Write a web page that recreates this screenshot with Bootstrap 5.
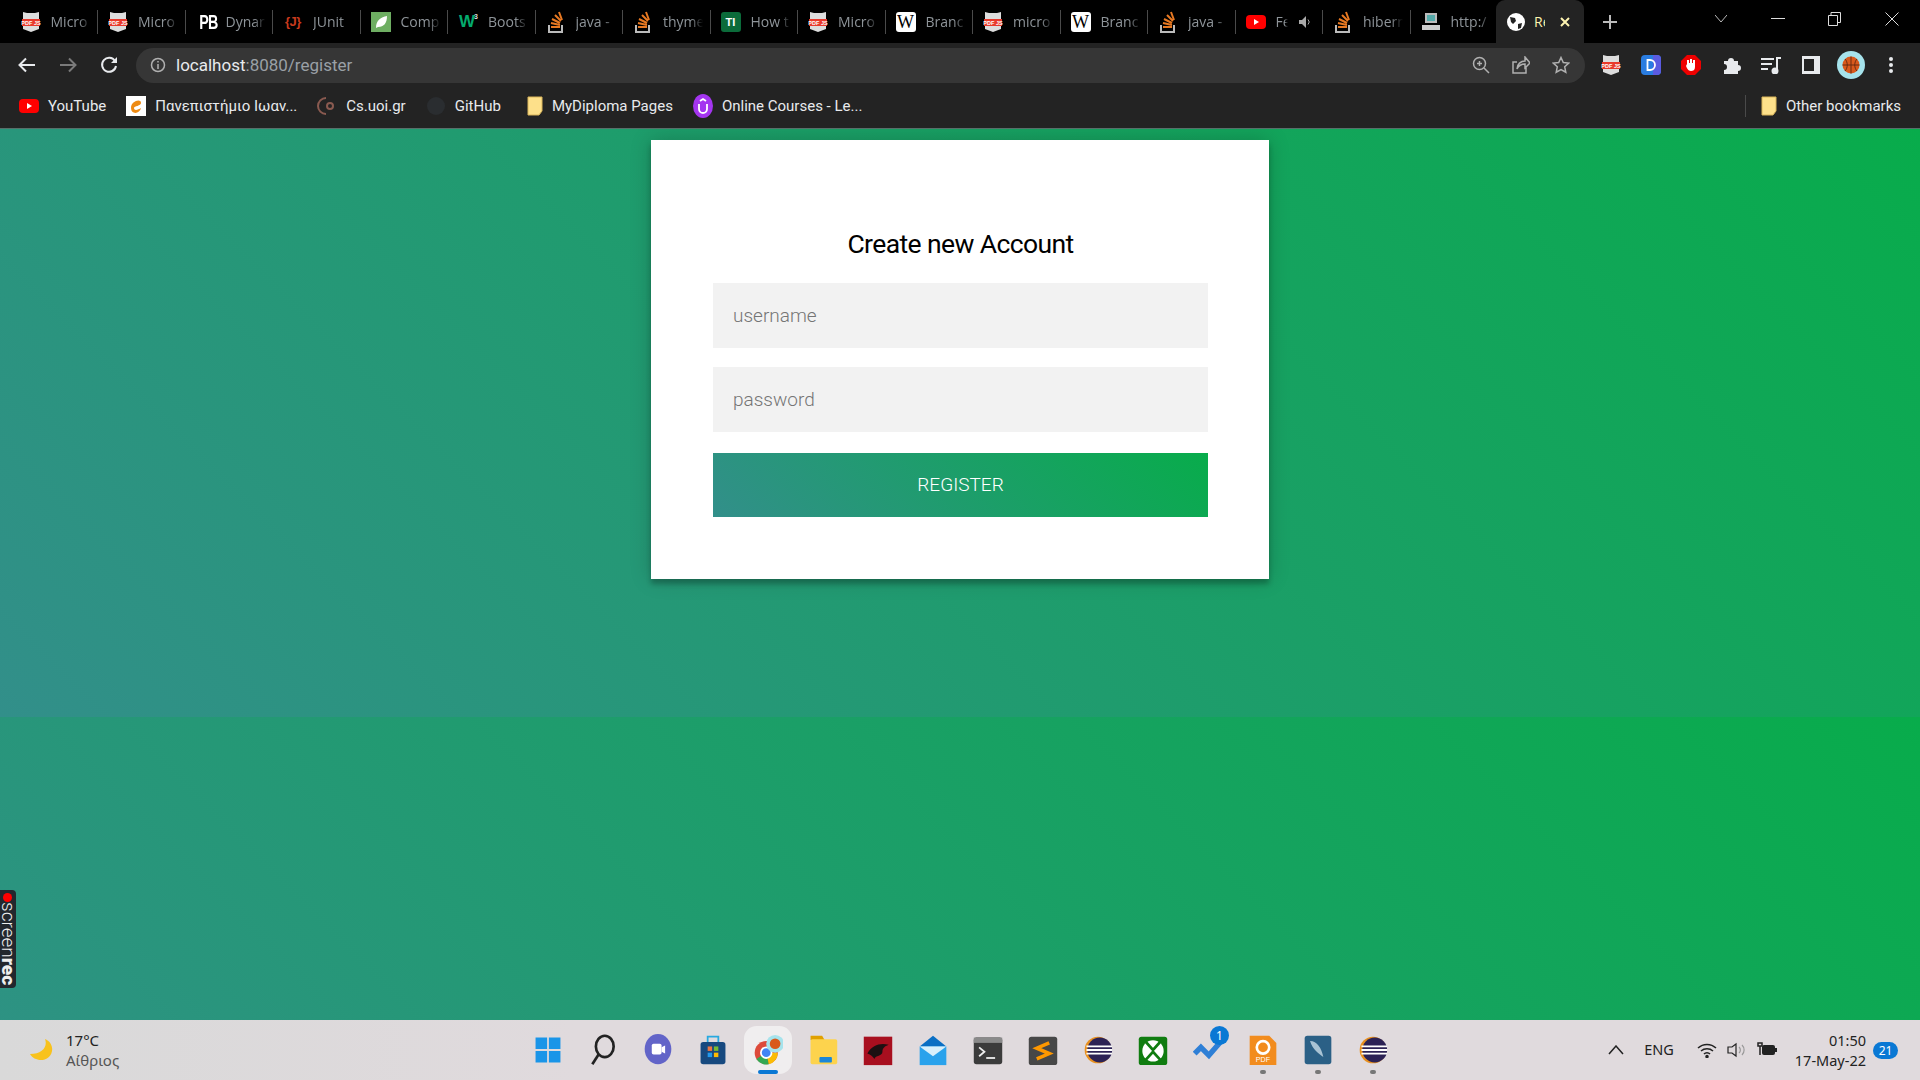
<!DOCTYPE html>
<html lang="en">
<head>
    <meta charset="UTF-8">
    <meta name="viewport" content="width=device-width, initial-scale=1.0">
    <title>Register</title>
    <link href="https://cdn.jsdelivr.net/npm/bootstrap@5.3.0/dist/css/bootstrap.min.css" rel="stylesheet">
    <style>
        html, body { height: 100%; overflow: hidden; }
        body { font-family: Roboto, "Liberation Sans", sans-serif; background: #000; }
        .screen { height: 1080px; width: 1920px; }
        .icon-defs { display: none; }

        /* browser chrome */
        .tab-strip { height: 43px; background: #000; padding-left: 10.5px; font-family: "Open Sans", Roboto, sans-serif; }
        .tab-item { width: 87.5px; height: 43px; position: relative; padding-left: 10px; gap: 10px; color: #8e9499; font-size: 14px; overflow: hidden; white-space: nowrap; flex: none; }
        .tab-item::after { content: ""; position: absolute; right: 0; top: 10px; height: 24px; width: 1px; background: #4a4a4a; }
        .tab-item svg, .fav { flex: none; }
        .tab-name { overflow: hidden; width: 40px; flex: none; -webkit-mask-image: linear-gradient(to right, #000 70%, transparent); mask-image: linear-gradient(to right, #000 70%, transparent); }
        .tab-short { width: 12px; }
        .tab-active { width: 88px; margin-left: -2px; background: #232323; border-radius: 9px 9px 0 0; color: #fdf3b0; padding-left: 11px; gap: 9px; }
        .tab-active::after { display: none; }
        .tab-active .tab-name { width: 11px; -webkit-mask-image: none; mask-image: none; }
        .tab-close { margin-left: 5px; }
        .fav { width: 20px; height: 20px; display: block; text-align: center; line-height: 20px; }
        .fav-pb { color: #fff; font: 700 21px/20px "Liberation Sans", sans-serif; letter-spacing: -1px; transform: scaleX(.68); }
        .fav-junit { color: #c93a1d; font: 700 13px/20px "Liberation Sans", sans-serif; letter-spacing: -.5px; }
        .fav-w3 { color: #04aa6d; font: 700 17px/20px "Liberation Sans", sans-serif; letter-spacing: -1px; }
        .fav-w3 sup { font-size: 7px; color: #ddd; top: -8px; }
        .fav-ti { background: #0b6b3a; border-radius: 3px; color: #fff; font: 700 11px/20px "Liberation Sans", sans-serif; }
        .fav-wiki { background: #fff; border-radius: 3px; color: #000; font: 400 18px/20px "Liberation Serif", serif; }
        .new-tab { margin-left: 18px; }
        .win-slot { width: 57px; display: flex; justify-content: center; margin-bottom: 5px; }

        .tool-bar { height: 44px; background: #232323; padding-left: 18px; }
        .nav-gap { margin-left: 23px; }
        .url-box { height: 35px; width: 1449px; margin: 0 6px 0 18px; background: #363636; border-radius: 18px; padding: 0 15px 0 14px; font-size: 17px; color: #9aa0a6; flex: none; }
        .url-text { margin-left: 2px; padding-top: 1px; }
        .url-host { color: #e8eaed; }
        .tool-slot { width: 40px; display: flex; justify-content: center; flex: none; }

        .mark-bar { height: 42px; background: #232323; padding: 0 19px 3px; color: #e8eaed; font-size: 15px; white-space: nowrap; border-bottom: 1px solid #56706a; }
        .mark-item { gap: 9px; margin-right: 20px; }
        .mark-wide { margin-right: 26px; }
        .mark-other { margin-left: auto; margin-right: 0; border-left: 1px solid #4a4a4a; padding-left: 15px; }

        /* page */
        .page-area { height: 891px; position: relative; background: linear-gradient(45deg, #328f8a, #08ac4b); background-size: 100% 588px; overflow: hidden; }
        .signup-box { width: 618px; margin: 11px auto 0; height: 439px; background: #fff; padding: 67px 61px 0 62px; box-shadow: 0 0 20px 0 rgba(0,0,0,.2), 0 5px 5px 0 rgba(0,0,0,.24); }
        .signup-box h1 { font-size: 26.500px; font-weight: 400; color: #000; text-align: center; line-height: 74px; margin: 0 0 2px; letter-spacing: -.6px; }
        .signup-input { display: block; width: 100%; height: 65px; border: 0; border-radius: 0; background: #f2f2f2; padding: 0 20px; font-size: 19px; font-weight: 300; margin-bottom: 19px; font-family: Roboto, sans-serif; }
        .signup-input::placeholder { color: #757575; }
        .signup-btn { display: block; width: 100%; height: 64px; margin-top: 21px; border: 0; border-radius: 0; color: #fff; font-size: 19px; font-weight: 300; text-transform: uppercase; background: linear-gradient(45deg, #328f8a, #08ac4b); }
        .rec-tag { position: absolute; left: 0; top: 761px; width: 16px; height: 98px; background: #23272e; border-radius: 0 4px 4px 0; color: #eee; font-size: 19px; font-weight: 300; line-height: 15px; writing-mode: vertical-rl; padding-top: 12px; white-space: nowrap; }
        .rec-tag b { font-weight: 900; }
        .rec-dot { position: absolute; left: 3px; top: 3px; width: 9px; height: 9px; border-radius: 50%; background: #f00; }

        /* taskbar */
        .task-bar { height: 60px; background: linear-gradient(to right, #d9d9d9, #e0dadd 30%); position: relative; color: #222; font-family: "Noto Sans", sans-serif; }
        .weather { position: absolute; left: 29px; top: 10px; gap: 13px; font-size: 15px; line-height: 20px; }
        .weather-sub { color: #555; }
        .task-icons { position: absolute; left: 532px; top: 14px; gap: 23px; }
        .task-slot { width: 32px; height: 32px; position: relative; }
        .task-slot svg { display: block; width: 30px; height: 32px; margin: 0 auto; }
        .task-chrome { background: #f0eeef; border-radius: 5px; box-shadow: 0 0 0 8px #f0eeef; }
        .run-pip { position: absolute; left: 13px; bottom: -8px; width: 6px; height: 4px; border-radius: 2px; background: #777; }
        .run-main { left: 6px; width: 20px; background: #0a78d4; }
        .tray { position: absolute; right: 22px; top: 0; height: 60px; font-size: 14.500px; }
        .tray-g23 { margin-right: 23px; }
        .tray-g20 { margin-right: 20px; }
        .tray-g18 { margin-right: 18px; }
        .tray-g10 { margin-right: 10px; }
        .clock { text-align: right; line-height: 20px; margin-right: 7px; }
        .note-badge { width: 25px; height: 17px; border-radius: 9px; background: #0a78d4; color: #fff; font-size: 12px; text-align: center; line-height: 17px; }
        .count-pip { position: absolute; right: -5px; top: -8px; width: 19px; height: 19px; border-radius: 50%; background: #0a78d4; color: #fff; font-size: 12px; text-align: center; line-height: 19px; }
    </style>
</head>
<body>
<svg class="icon-defs" aria-hidden="true">
    <symbol id="i-pdf" viewBox="0 0 20 24"><path d="M2 2l4 1h8l4-1v17l-8 3-8-3z" fill="#ddd"/><rect x="1" y="9" width="18" height="7" fill="#e8392c"/><text x="10" y="14.500" text-anchor="middle" font-family="Liberation Sans" font-weight="700" font-size="5.500" fill="#fff">PDF JS</text></symbol>
    <symbol id="i-so" viewBox="0 0 20 24"><g fill="none" stroke-width="2"><path d="M5 17h9M5 13l9 2M6 9l8 4M9 5l6 6M13 2l3 8" stroke="#e87922"/><path d="M3 15v7h13v-7" stroke="#bbb"/></g></symbol>
    <symbol id="i-folder" viewBox="0 0 16 20"><path d="M1 1h14v14l-3 4H1z" fill="#fde08a" stroke="#d9b55a"/></symbol>
    <symbol id="i-eclipse" viewBox="0 0 32 36"><circle cx="16" cy="18" r="15" fill="#e8901f"/><circle cx="18" cy="18" r="14" fill="#2c2255"/><path d="M3 14h29M3 18h30M3 22h29" stroke="#fff" stroke-width="2"/></symbol>
</svg>
<div class="screen d-flex flex-column">
    <div class="tab-strip d-flex align-items-center">
        <div class="tab-item d-flex align-items-center"><svg width="20" height="24"><use href="#i-pdf"/></svg><span class="tab-name">Micro</span></div>
        <div class="tab-item d-flex align-items-center"><svg width="20" height="24"><use href="#i-pdf"/></svg><span class="tab-name">Micro</span></div>
        <div class="tab-item d-flex align-items-center"><span class="fav fav-pb">PB</span><span class="tab-name">Dynar</span></div>
        <div class="tab-item d-flex align-items-center"><span class="fav fav-junit">{J}</span><span class="tab-name">JUnit</span></div>
        <div class="tab-item d-flex align-items-center"><svg width="20" height="20" viewBox="0 0 20 20"><rect width="20" height="20" fill="#6eae62"/><path d="M5 16c0-8 5-11 11-12 0 7-3 11-9 11z" fill="#fff"/></svg><span class="tab-name">Comp</span></div>
        <div class="tab-item d-flex align-items-center"><span class="fav fav-w3">W<sup>3</sup></span><span class="tab-name">Boots</span></div>
        <div class="tab-item d-flex align-items-center"><svg width="20" height="24"><use href="#i-so"/></svg><span class="tab-name">java -</span></div>
        <div class="tab-item d-flex align-items-center"><svg width="20" height="24"><use href="#i-so"/></svg><span class="tab-name">thyme</span></div>
        <div class="tab-item d-flex align-items-center"><span class="fav fav-ti">TI</span><span class="tab-name">How t</span></div>
        <div class="tab-item d-flex align-items-center"><svg width="20" height="24"><use href="#i-pdf"/></svg><span class="tab-name">Micro</span></div>
        <div class="tab-item d-flex align-items-center"><span class="fav fav-wiki">W</span><span class="tab-name">Branc</span></div>
        <div class="tab-item d-flex align-items-center"><svg width="20" height="24"><use href="#i-pdf"/></svg><span class="tab-name">micro</span></div>
        <div class="tab-item d-flex align-items-center"><span class="fav fav-wiki">W</span><span class="tab-name">Branc</span></div>
        <div class="tab-item d-flex align-items-center"><svg width="20" height="24"><use href="#i-so"/></svg><span class="tab-name">java -</span></div>
        <div class="tab-item d-flex align-items-center"><svg width="20" height="14" viewBox="0 0 20 14"><rect width="20" height="14" rx="4" fill="#f00"/><path d="M8 4l5 3-5 3z" fill="#fff"/></svg><span class="tab-name tab-short">Fe</span><svg width="14" height="14" viewBox="0 0 14 14"><path d="M1 5h3l4-4v12l-4-4H1z" fill="#aaa"/><path d="M10 4.500a3.500 3.500 0 0 1 0 5" stroke="#aaa" fill="none"/></svg></div>
        <div class="tab-item d-flex align-items-center"><svg width="20" height="24"><use href="#i-so"/></svg><span class="tab-name">hibern</span></div>
        <div class="tab-item d-flex align-items-center"><svg width="20" height="20" viewBox="0 0 20 20"><rect x="4" y="1" width="12" height="10" fill="#bbb"/><rect x="6" y="3" width="8" height="6" fill="#5aa"/><rect x="1" y="13" width="18" height="5" fill="#ccc"/></svg><span class="tab-name">http:/</span></div>
        <div class="tab-item tab-active d-flex align-items-center"><svg width="18" height="18" viewBox="0 0 18 18"><circle cx="9" cy="9" r="9" fill="#fff"/><path d="M3 4l5 1 1 3-3 3-2-2zM11 11l4-1-1 5-3 1z" fill="#232323"/></svg><span class="tab-name">Re</span><svg class="tab-close" width="12" height="12" viewBox="0 0 12 12" fill="none" stroke="#fdf3b0" stroke-width="2"><path d="M2 2l8 8M10 2l-8 8"/></svg></div>
        <svg class="new-tab" width="16" height="16" viewBox="0 0 16 16" fill="none" stroke="#bbb" stroke-width="2"><path d="M8 1v14M1 8h14"/></svg>
        <div class="ms-auto d-flex align-items-center">
            <span class="win-slot"><svg width="12" height="8" viewBox="0 0 12 8" fill="none" stroke="#bbb"><path d="M0 0l6 7 6-7"/></svg></span>
            <span class="win-slot"><svg width="14" height="2" viewBox="0 0 14 2"><rect width="14" height="1" fill="#ddd"/></svg></span>
            <span class="win-slot"><svg width="13" height="14" viewBox="0 0 13 14" fill="none" stroke="#ddd"><path d="M.5 3.500h9v10h-9zM3 3V.5h9.500v10H10"/></svg></span>
            <span class="win-slot"><svg width="14" height="14" viewBox="0 0 14 14" fill="none" stroke="#ddd"><path d="M.5.5l13 13M13.500.5l-13 13"/></svg></span>
        </div>
    </div>

    <div class="tool-bar d-flex align-items-center">
        <svg width="18" height="16" viewBox="0 0 18 16" fill="none" stroke="#e8eaed" stroke-width="2"><path d="M17 8H2M8 1.500L1.500 8 8 14.500"/></svg>
        <svg class="nav-gap" width="18" height="16" viewBox="0 0 18 16" fill="none" stroke="#7a7a7a" stroke-width="2"><path d="M1 8h15M10 1.500L16.500 8 10 14.500"/></svg>
        <svg class="nav-gap" width="18" height="18" viewBox="0 0 18 18" fill="none" stroke="#e8eaed" stroke-width="2"><path d="M15 5a7 7 0 1 0 1 5"/><path d="M17 1v6h-6z" fill="#e8eaed" stroke="none"/></svg>
        <div class="url-box d-flex align-items-center">
            <svg class="me-2" width="16" height="16" viewBox="0 0 16 16" fill="none" stroke="#b0b0b0" stroke-width="1.500"><circle cx="8" cy="8" r="6.500"/><path d="M8 7v5M8 4v1.500"/></svg>
            <span class="url-text"><span class="url-host">localhost</span>:8080/register</span>
            <div class="ms-auto d-flex align-items-center" style="gap:22px">
                <svg width="18" height="18" viewBox="0 0 18 18" fill="none" stroke="#b0b0b0" stroke-width="1.500"><circle cx="7.500" cy="7.500" r="6"/><path d="M12 12l5 5M5 7.500h5M7.500 5v5"/></svg>
                <svg width="18" height="18" viewBox="0 0 18 18" fill="none" stroke="#b0b0b0" stroke-width="1.500"><path d="M14 11v6H1V6h4M5 13c0-5 4-8 8-8V1l5 6-5 5V8c-3 0-6 1-8 5z"/></svg>
                <svg width="18" height="18" viewBox="0 0 18 18" fill="none" stroke="#b0b0b0" stroke-width="1.500"><path d="M9 1.500l2.300 5 5.400.6-4 3.700 1.100 5.400L9 13.500l-4.800 2.700 1.100-5.400-4-3.700 5.400-.6z"/></svg>
            </div>
        </div>
        <span class="tool-slot"><svg width="20" height="24"><use href="#i-pdf"/></svg></span>
        <span class="tool-slot"><svg width="20" height="24" viewBox="0 0 20 24"><rect y="2" width="20" height="20" rx="4" fill="#2a7de1"/><path d="M12 2h4a4 4 0 0 1 4 4v12a4 4 0 0 1-4 4h-4z" fill="#5b5be0"/><path d="M6.500 7H9a5 5 0 0 1 0 10H6.500z" fill="none" stroke="#fff" stroke-width="1.800"/></svg></span>
        <span class="tool-slot"><svg width="20" height="20" viewBox="0 0 20 20"><path d="M6 0h8l6 6v8l-6 6H6l-6-6V6z" fill="#e00"/><path d="M6 9V5h2v3h1V4h2v4h1V5h2v7c0 3-2 4-4 4-3 0-4-3-5-5z" fill="#fff"/></svg></span>
        <span class="tool-slot"><svg width="19" height="19" viewBox="0 0 19 19"><path d="M2 5h4a3 3 0 0 1 6 0h4v4a3 3 0 0 1 0 6v3H2v-4a3 3 0 0 0 0-6z" fill="#e8eaed"/></svg></span>
        <span class="tool-slot"><svg width="20" height="18" viewBox="0 0 20 18" fill="none" stroke="#e8eaed" stroke-width="2"><path d="M0 3h13M0 8h11M0 13h7M16 14V2h4"/><circle cx="14" cy="15" r="2.500" fill="#e8eaed"/></svg></span>
        <span class="tool-slot"><svg width="18" height="18" viewBox="0 0 18 18"><rect width="18" height="18" fill="#e8eaed"/><rect x="2" y="3" width="10" height="12" fill="#232323"/></svg></span>
        <span class="tool-slot"><svg width="28" height="28" viewBox="0 0 28 28"><circle cx="14" cy="14" r="14" fill="#a6e3ec"/><circle cx="14" cy="14" r="8.500" fill="#d9591c"/><path d="M14 5.500v17M5.500 14h17M8 8c3 3 3 9 0 12M20 8c-3 3-3 9 0 12" fill="none" stroke="#6b2c10"/></svg></span>
        <span class="tool-slot"><svg width="4" height="18" viewBox="0 0 4 18"><circle cx="2" cy="3" r="2" fill="#e8eaed"/><circle cx="2" cy="9" r="2" fill="#e8eaed"/><circle cx="2" cy="15" r="2" fill="#e8eaed"/></svg></span>
    </div>

    <div class="mark-bar d-flex align-items-center">
        <div class="mark-item d-flex align-items-center"><svg width="20" height="14" viewBox="0 0 20 14"><rect width="20" height="14" rx="4" fill="#f00"/><path d="M8 4l5 3-5 3z" fill="#fff"/></svg>YouTube</div>
        <div class="mark-item d-flex align-items-center"><svg width="20" height="20" viewBox="0 0 20 20"><rect width="20" height="20" fill="#fff"/><path d="M5 12c0-7 10-10 10-5 0 3-7 3-7 5 0 3 4 2 7 0-1 6-10 7-10 0z" fill="#ee8a12"/></svg>Πανεπιστήμιο Ιωαν...</div>
        <div class="mark-item d-flex align-items-center"><svg width="20" height="20" viewBox="0 0 20 20" fill="none" stroke="#8a5a50" stroke-width="2"><path d="M9 2a8 8 0 0 0 0 16"/><circle cx="13" cy="10" r="3"/></svg>Cs.uoi.gr</div>
        <div class="mark-item mark-wide d-flex align-items-center"><svg width="20" height="20" viewBox="0 0 20 20"><circle cx="10" cy="10" r="9" fill="#2a2d30"/></svg>GitHub</div>
        <div class="mark-item d-flex align-items-center"><svg width="16" height="20"><use href="#i-folder"/></svg>MyDiploma Pages</div>
        <div class="mark-item d-flex align-items-center"><svg width="20" height="24" viewBox="0 0 20 24"><ellipse cx="10" cy="12" rx="10" ry="12" fill="#a435f0"/><path d="M6 10v5a4 4 0 0 0 8 0v-5M7 7l3-2 3 2" fill="none" stroke="#fff" stroke-width="1.800"/></svg>Online Courses - Le...</div>
        <div class="mark-item mark-other d-flex align-items-center"><svg width="16" height="20"><use href="#i-folder"/></svg>Other bookmarks</div>
    </div>

    <div class="page-area">
        <div class="signup-box">
            <h1>Create new Account</h1>
            <form>
                <input class="signup-input" type="text" placeholder="username">
                <input class="signup-input" type="password" placeholder="password">
                <button class="signup-btn" type="button">Register</button>
            </form>
        </div>
        <div class="rec-tag"><span class="rec-dot"></span>screen<b>rec</b></div>
    </div>

    <div class="task-bar">
        <div class="weather d-flex align-items-center">
            <svg width="24" height="24" viewBox="0 0 24 24"><path d="M16 1c3 8-3 15-15 15 4 8 20 9 22-3 1-5-2-10-7-12z" fill="#f8c21c"/></svg>
            <div><div>17°C</div><div class="weather-sub">Αίθριος</div></div>
        </div>
        <div class="task-icons d-flex">
            <div class="task-slot"><svg viewBox="0 0 32 36"><path d="M2 4h13v13H2zM17 4h13v13H17zM2 19h13v13H2zM17 19h13v13H17z" fill="#1a95e8"/></svg></div>
            <div class="task-slot"><svg viewBox="0 0 32 36" fill="none" stroke="#222" stroke-width="3"><ellipse cx="18" cy="14" rx="10" ry="12"/><path d="M11 23l-7 11"/></svg></div>
            <div class="task-slot"><svg viewBox="0 0 32 36"><ellipse cx="16" cy="17" rx="15" ry="17" fill="#6264c8"/><rect x="9" y="11" width="11" height="12" rx="2" fill="#fff"/><path d="M20 15l4-2v9l-4-2z" fill="#fff"/></svg></div>
            <div class="task-slot"><svg viewBox="0 0 32 36"><rect x="2" y="9" width="28" height="25" rx="3" fill="#17497f"/><path d="M10 9V3h12v6" fill="none" stroke="#29a9e0" stroke-width="2"/><rect x="10" y="14" width="5" height="5" fill="#e74"/><rect x="17" y="14" width="5" height="5" fill="#7b3"/><rect x="10" y="21" width="5" height="5" fill="#29e"/><rect x="17" y="21" width="5" height="5" fill="#fb0"/></svg></div>
            <div class="task-slot task-chrome"><svg viewBox="0 0 32 36"><circle cx="14" cy="21" r="13" fill="#dd4a3a"/><path d="M14 21L3 28a13 13 0 0 0 14 6z" fill="#34a853"/><path d="M14 21l3 13a13 13 0 0 0 10-13z" fill="#fbbc05"/><circle cx="14" cy="21" r="6" fill="#4285f4" stroke="#fff" stroke-width="2"/><circle cx="24" cy="11" r="10" fill="#a6e3ec"/><circle cx="24" cy="11" r="6" fill="#d9591c"/></svg><span class="run-pip run-main"></span></div>
            <div class="task-slot"><svg viewBox="0 0 32 36"><path d="M2 2h13l3 5h-16z" fill="#e0a000"/><rect x="2" y="6" width="30" height="28" rx="2" fill="#fdd34d"/><rect x="12" y="26" width="14" height="6" rx="1" fill="#1a86d8"/></svg></div>
            <div class="task-slot"><svg viewBox="0 0 32 36"><rect y="3" width="32" height="32" fill="#a80f1f"/><path d="M4 22c6-10 14-12 24-10-5 2-7 4-7 8 0 5-8 4-9 8-2-2-4-5-8-6z" fill="#1c1012"/></svg></div>
            <div class="task-slot"><svg viewBox="0 0 32 36"><path d="M1 14L16 2l15 12z" fill="#0a6fc4"/><rect x="1" y="14" width="30" height="21" fill="#2aa2ec"/><path d="M1 14l15 11 15-11z" fill="#d8f0fc"/></svg></div>
            <div class="task-slot"><svg viewBox="0 0 32 36"><rect y="4" width="32" height="30" rx="3" fill="#3b3b3b"/><rect y="4" width="32" height="6" fill="#8a8a8a"/><path d="M6 15l6 5-6 5" fill="none" stroke="#eee" stroke-width="2"/><rect x="14" y="26" width="10" height="2" fill="#eee"/></svg></div>
            <div class="task-slot"><svg viewBox="0 0 32 36"><rect y="3" width="32" height="32" rx="3" fill="#474747"/><path d="M23 10L9 16l14 6-14 6" fill="none" stroke="#ff9800" stroke-width="4"/></svg></div>
            <div class="task-slot"><svg viewBox="0 0 32 36"><use href="#i-eclipse"/></svg></div>
            <div class="task-slot"><svg viewBox="0 0 32 36"><rect y="3" width="32" height="32" rx="3" fill="#107c10"/><circle cx="16" cy="19" r="12" fill="#fff"/><path d="M8 9l8 9 8-9M7 30l9-10 9 10" fill="none" stroke="#107c10" stroke-width="3"/></svg></div>
            <div class="task-slot"><svg viewBox="0 0 32 36"><path d="M1 22l7-7 9 9 13-15" fill="none" stroke="#2f7fd6" stroke-width="6"/></svg><span class="count-pip">1</span></div>
            <div class="task-slot"><svg viewBox="0 0 32 36"><path d="M1 2h22l8 8v25H1z" fill="#f28c1e"/><circle cx="16" cy="15" r="7" fill="none" stroke="#fff" stroke-width="3"/><text x="16" y="32" text-anchor="middle" font-family="Liberation Sans" font-size="8" fill="#fff">PDF</text></svg><span class="run-pip"></span></div>
            <div class="task-slot"><svg viewBox="0 0 32 36"><rect x="1" y="2" width="30" height="32" rx="3" fill="#2b6086"/><path d="M7 8c8 0 13 8 15 18-5-4-12-8-15-18z" fill="#a9c3d4"/></svg><span class="run-pip"></span></div>
            <div class="task-slot"><svg viewBox="0 0 32 36"><use href="#i-eclipse"/></svg><span class="run-pip"></span></div>
        </div>
        <div class="tray d-flex align-items-center">
            <svg class="tray-g20" width="16" height="10" viewBox="0 0 16 10" fill="none" stroke="#222" stroke-width="1.500"><path d="M1 9l7-8 7 8"/></svg>
            <span class="tray-g23">ENG</span>
            <svg class="tray-g10" width="20" height="16" viewBox="0 0 20 16" fill="none" stroke="#222" stroke-width="1.500"><path d="M1 6a13 13 0 0 1 18 0M4 9a9 9 0 0 1 12 0M7 12a4 4 0 0 1 6 0"/><circle cx="10" cy="14.500" r="1" fill="#222"/></svg>
            <svg class="tray-g10" width="20" height="16" viewBox="0 0 20 16" fill="none" stroke="#222" stroke-width="1.200"><path d="M1 5h4l4-3v12l-4-3H1z"/><path d="M12 5a4 4 0 0 1 0 6M15 3a7 7 0 0 1 0 10" stroke="#999"/></svg>
            <svg class="tray-g18" width="20" height="16" viewBox="0 0 20 16"><path d="M1 1v3h4V1zM3 4v9" stroke="#222" fill="none" stroke-width="1.500"/><rect x="5" y="3" width="13" height="10" rx="2" fill="#222"/><rect x="18" y="6" width="2" height="4" fill="#222"/></svg>
            <div class="clock"><div>01:50</div><div>17-May-22</div></div>
            <div class="note-badge">21</div>
        </div>
    </div>
</div>
<script src="https://cdn.jsdelivr.net/npm/bootstrap@5.3.0/dist/js/bootstrap.bundle.min.js"></script>
</body>
</html>
